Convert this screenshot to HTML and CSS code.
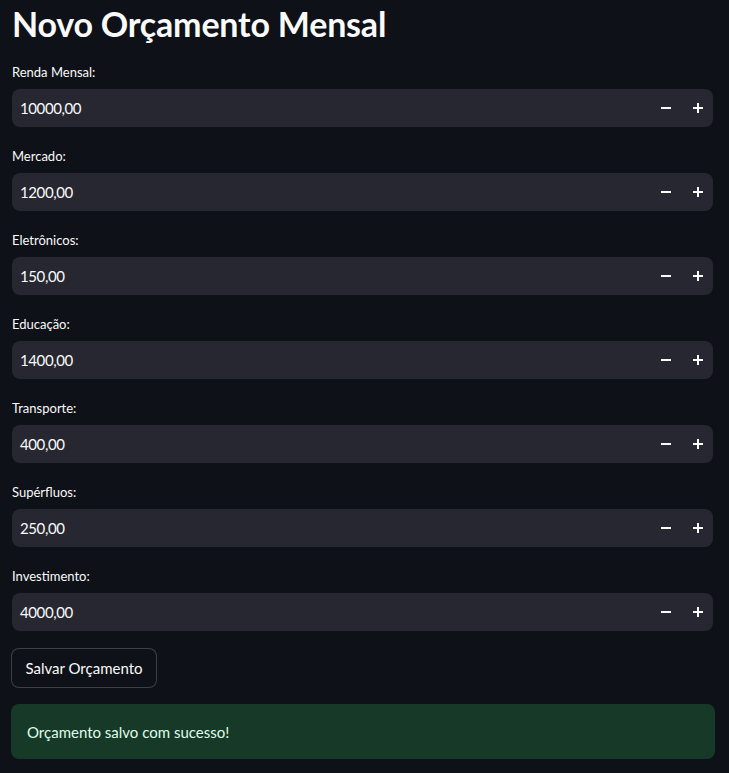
FILE: index.html
```html
<!DOCTYPE html>
<html lang="pt">
<head>
<meta charset="utf-8">
<title>Novo Orçamento Mensal</title>
<link rel="stylesheet" href="styles.css">
</head>
<body>
<main class="page">
  <h1 class="title">Novo Orçamento Mensal</h1>

  <div class="field">
    <label class="label">Renda Mensal:</label>
    <div class="input">
      <span class="value">10000,00</span>
      <button class="step" aria-label="diminuir"><svg width="10" height="10" viewBox="0 0 10 10"><rect x="0" y="4" width="10" height="2" fill="#fafafa"/></svg></button>
      <button class="step" aria-label="aumentar"><svg width="10" height="10" viewBox="0 0 10 10"><rect x="0" y="4" width="10" height="2" fill="#fafafa"/><rect x="4" y="0" width="2" height="10" fill="#fafafa"/></svg></button>
    </div>
  </div>

  <div class="field">
    <label class="label">Mercado:</label>
    <div class="input">
      <span class="value">1200,00</span>
      <button class="step" aria-label="diminuir"><svg width="10" height="10" viewBox="0 0 10 10"><rect x="0" y="4" width="10" height="2" fill="#fafafa"/></svg></button>
      <button class="step" aria-label="aumentar"><svg width="10" height="10" viewBox="0 0 10 10"><rect x="0" y="4" width="10" height="2" fill="#fafafa"/><rect x="4" y="0" width="2" height="10" fill="#fafafa"/></svg></button>
    </div>
  </div>

  <div class="field">
    <label class="label">Eletrônicos:</label>
    <div class="input">
      <span class="value">150,00</span>
      <button class="step" aria-label="diminuir"><svg width="10" height="10" viewBox="0 0 10 10"><rect x="0" y="4" width="10" height="2" fill="#fafafa"/></svg></button>
      <button class="step" aria-label="aumentar"><svg width="10" height="10" viewBox="0 0 10 10"><rect x="0" y="4" width="10" height="2" fill="#fafafa"/><rect x="4" y="0" width="2" height="10" fill="#fafafa"/></svg></button>
    </div>
  </div>

  <div class="field">
    <label class="label">Educação:</label>
    <div class="input">
      <span class="value">1400,00</span>
      <button class="step" aria-label="diminuir"><svg width="10" height="10" viewBox="0 0 10 10"><rect x="0" y="4" width="10" height="2" fill="#fafafa"/></svg></button>
      <button class="step" aria-label="aumentar"><svg width="10" height="10" viewBox="0 0 10 10"><rect x="0" y="4" width="10" height="2" fill="#fafafa"/><rect x="4" y="0" width="2" height="10" fill="#fafafa"/></svg></button>
    </div>
  </div>

  <div class="field">
    <label class="label">Transporte:</label>
    <div class="input">
      <span class="value">400,00</span>
      <button class="step" aria-label="diminuir"><svg width="10" height="10" viewBox="0 0 10 10"><rect x="0" y="4" width="10" height="2" fill="#fafafa"/></svg></button>
      <button class="step" aria-label="aumentar"><svg width="10" height="10" viewBox="0 0 10 10"><rect x="0" y="4" width="10" height="2" fill="#fafafa"/><rect x="4" y="0" width="2" height="10" fill="#fafafa"/></svg></button>
    </div>
  </div>

  <div class="field">
    <label class="label">Supérfluos:</label>
    <div class="input">
      <span class="value">250,00</span>
      <button class="step" aria-label="diminuir"><svg width="10" height="10" viewBox="0 0 10 10"><rect x="0" y="4" width="10" height="2" fill="#fafafa"/></svg></button>
      <button class="step" aria-label="aumentar"><svg width="10" height="10" viewBox="0 0 10 10"><rect x="0" y="4" width="10" height="2" fill="#fafafa"/><rect x="4" y="0" width="2" height="10" fill="#fafafa"/></svg></button>
    </div>
  </div>

  <div class="field">
    <label class="label">Investimento:</label>
    <div class="input">
      <span class="value">4000,00</span>
      <button class="step" aria-label="diminuir"><svg width="10" height="10" viewBox="0 0 10 10"><rect x="0" y="4" width="10" height="2" fill="#fafafa"/></svg></button>
      <button class="step" aria-label="aumentar"><svg width="10" height="10" viewBox="0 0 10 10"><rect x="0" y="4" width="10" height="2" fill="#fafafa"/><rect x="4" y="0" width="2" height="10" fill="#fafafa"/></svg></button>
    </div>
  </div>

  <button class="save">Salvar Orçamento</button>

  <div class="alert">Orçamento salvo com sucesso!</div>
</main>
</body>
</html>
```

FILE: styles.css
```css
html, body {
  margin: 0;
  padding: 0;
  background: #0e1117;
  color: #fafafa;
  font-family: Lato, "Noto Sans", sans-serif;
}

.page {
  width: 729px;
  height: 773px;
  box-sizing: border-box;
  padding: 0 16px 0 11px;
  overflow: hidden;
  display: flex;
  flex-direction: column;
}

.page > * {
  flex-shrink: 0;
}

.title {
  margin: 0;
  padding: 4px 0 0 1px;
  height: 61px;
  box-sizing: border-box;
  font-size: 34px;
  font-weight: 700;
  line-height: 40px;
  letter-spacing: -0.2px;
  color: #fafafa;
}

.field {
  display: flex;
  flex-direction: column;
  margin-bottom: 18px;
}

.label {
  height: 28px;
  padding-left: 1px;
  font-size: 13px;
  line-height: 20px;
  padding-top: 1px;
  box-sizing: border-box;
  color: #fafafa;
}

.input {
  height: 38px;
  margin-left: 1px;
  background: #262730;
  border-radius: 8px;
  display: flex;
  align-items: center;
  padding-left: 8px;
}

.value {
  flex: 1;
  font-size: 15px;
  letter-spacing: -0.4px;
  color: #fafafa;
}

.step {
  width: 32px;
  height: 38px;
  box-sizing: border-box;
  border: 0;
  background: transparent;
  padding: 0 0 0 2px;
  display: flex;
  align-items: center;
  justify-content: center;
}

.save {
  align-self: flex-start;
  margin-top: -1px;
  height: 40px;
  width: 146px;
  padding: 0;
  background: #0e1117;
  color: #fafafa;
  border: 1px solid rgba(250, 250, 250, 0.2);
  border-radius: 8px;
  font-family: Lato, "Noto Sans", sans-serif;
  font-size: 15px;
}

.alert {
  margin-top: 16px;
  height: 55px;
  background: #173928;
  color: #dffde9;
  border-radius: 8px;
  display: flex;
  align-items: center;
  padding-left: 16px;
  font-size: 15px;
  margin-right: -2px;
}
```
